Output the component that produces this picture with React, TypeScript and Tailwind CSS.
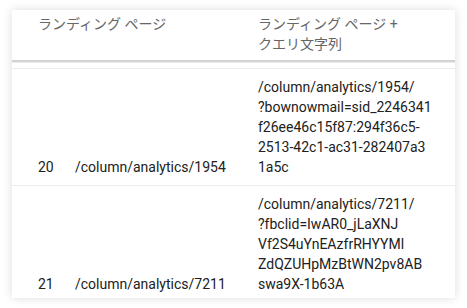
const rows = [
  {
    no: 20,
    page: "/column/analytics/1954",
    lines: [
      "/column/analytics/1954/",
      "?bownowmail=sid_2246341",
      "f26ee46c15f87:294f36c5-",
      "2513-42c1-ac31-282407a3",
      "1a5c",
    ],
  },
  {
    no: 21,
    page: "/column/analytics/7211",
    lines: [
      "/column/analytics/7211/",
      "?fbclid=IwAR0_jLaXNJ",
      "Vf2S4uYnEAzfrRHYYMl",
      "ZdQZUHpMzBtWN2pv8AB",
      "swa9X-1b63A",
    ],
  },
];

const font = { fontFamily: "Roboto, 'Noto Sans CJK JP', sans-serif" };

export default function App() {
  return (
    <div className="w-[467px] h-[308px] bg-white pt-[10px] pl-[12px]" style={font}>
      <div className="w-[443px] h-[288px] overflow-hidden bg-white shadow-[0_0_9px_rgba(0,0,0,0.14)] text-[14px] leading-[20px]">
        {/* column headers */}
        <div className="grid grid-cols-[246px_1fr] h-[52px] pt-[4px] border-b-2 border-[#d2d2d2] text-[#666]">
          <div className="pl-[26px]">ランディング ページ</div>
          <div>
            ランディング ページ +
            <br />
            クエリ文字列
          </div>
        </div>
        <div className="h-px bg-[#ededed]" />
        <div className="h-[5px]" />

        {/* data rows */}
        <div className="border-t border-[#ececec]">
          {rows.map((r) => (
            <div
              key={r.no}
              className="grid grid-cols-[63px_183px_1fr] items-end py-2 border-b border-[#ececec] text-[#212121]"
            >
              <div className="pl-[26px]">{r.no}</div>
              <div>{r.page}</div>
              <div>
                {r.lines.map((l, i) => (
                  <div key={i}>{l}</div>
                ))}
              </div>
            </div>
          ))}
        </div>
      </div>
    </div>
  );
}
